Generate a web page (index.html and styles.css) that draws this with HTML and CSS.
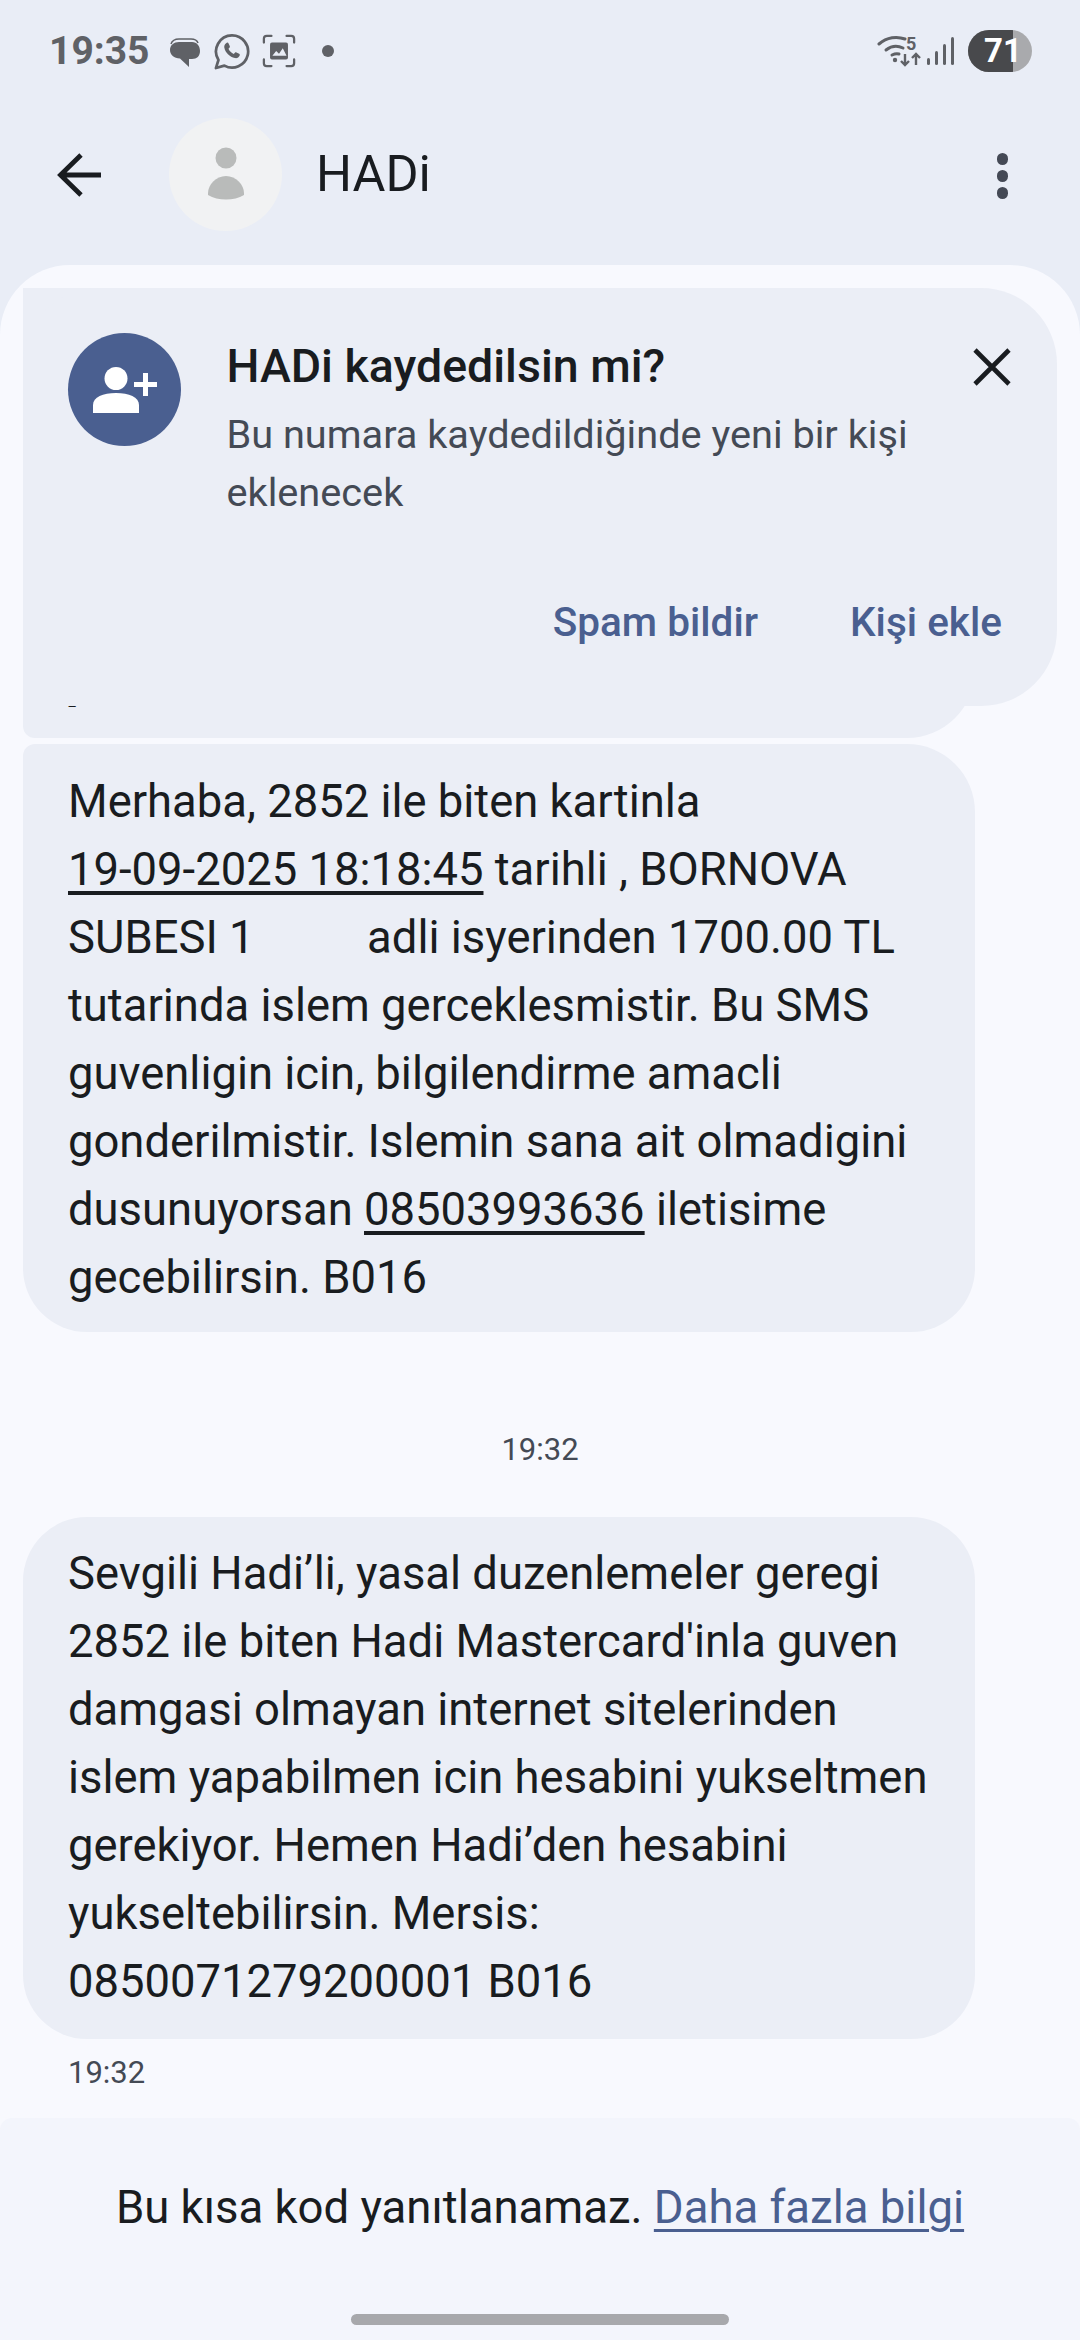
FILE: index.html
```html
<!DOCTYPE html>
<html lang="tr">
<head>
<meta charset="utf-8">
<title>HADi</title>
<link rel="stylesheet" href="styles.css">
</head>
<body>
<div class="screen">
  <div class="status">
    <div class="status-left">
      <span class="clock">19:35</span>
      <svg class="si msg" width="32" height="32" viewBox="0 0 32 32"><path d="M2 7c1-3 4-5 8-5h12c3 0 6 1 7 4" fill="none" stroke="#5f6166" stroke-width="1.500"/><path d="M10 5h13c5 0 8 4 8 9s-3 8-8 8h-3v8l-9-8.500C5 21 1 18 1 13c0-5 4-8 9-8z" fill="#5f6166"/></svg>
      <svg class="si wa" width="37" height="37" viewBox="0 0 38 38"><path d="M19.500 2.500a16.500 16.500 0 1 1-7.800 31l-8.700 2.500 2.600-8.300a16.500 16.500 0 0 1 13.900-25.200z" fill="none" stroke="#5f6166" stroke-width="2.800" stroke-linejoin="round"/><path d="M13.500 10.500c1-1 2-.8 2.500.2l1.300 2.800c.2.600 0 1.200-.4 1.600l-1 1.100c1 2.400 3 4.300 5.400 5.400l1.200-1.300c.5-.5 1-.6 1.600-.3l2.700 1.400c.7.300.9 1 .6 1.800-.8 2-2.700 3-4.800 2.600-5.500-1.100-10-5.500-11-10.800-.3-2 .6-3.500 1.900-4.500z" fill="#5f6166"/></svg>
      <svg class="si" width="34" height="34" viewBox="0 0 36 36"><path d="M2 9V5q0-3 3-3h5M26 2h5q3 0 3 3v4M34 27v4q0 3-3 3h-5M10 34H5q-3 0-3-3v-4" fill="none" stroke="#5f6166" stroke-width="2.400" stroke-linecap="round"/><rect x="8.500" y="9" width="19" height="18" rx="2" fill="#5f6166"/><path d="M11 23l4-5 3 3 4-6 4 8z" fill="#e9edf6"/></svg>
      <span class="dot"></span>
    </div>
    <div class="status-right">
      <svg class="sr" width="44" height="40" viewBox="0 -8 44 40"><g fill="none" stroke="#5f6166" stroke-width="3" stroke-linecap="round"><path d="M2 9C10 2 20 1 28 4"/><path d="M9 15c5-4 11-5 17-2"/><path d="M15 20c2-1 4-2 7-1"/></g><circle cx="18" cy="25" r="2.200" fill="#5f6166"/><path d="M28 19v11m-4-4 4 4 4-4M39 30V19m-4 4 4-4 4 4" fill="none" stroke="#5f6166" stroke-width="2.400"/><text x="29" y="15" class="five">5</text></svg>
      <div class="signal"><i class="b1"></i><i class="b2"></i><i class="b3"></i><i class="b4"></i></div>
      <div class="battery"><span class="bat-fill">71</span></div>
    </div>
  </div>

  <header class="topbar">
    <svg class="back" width="46" height="46" viewBox="0 0 46 46"><path d="M45 23H6M25 3 4.500 23 25 43" fill="none" stroke="#191c20" stroke-width="4.800"/></svg>
    <div class="avatar">
      <svg width="40" height="56" viewBox="0 0 40 56"><circle cx="20" cy="11" r="10.500" fill="#b9bbba"/><path d="M2 46c0-8 8-17 18-17s18 9 18 17v2c-10 6-26 6-36 0z" fill="#b9bbba"/></svg>
    </div>
    <h1 class="name">HADi</h1>
    <div class="menu"><i></i><i></i><i></i></div>
  </header>

  <main class="surface">
    <div class="card">
      <div class="card-top">
        <div class="card-avatar">
          <svg width="64" height="46" viewBox="0 0 64 46"><circle cx="23" cy="11.500" r="11.500" fill="#fff"/><path d="M0 46V38c0-8 10-12 23-12s23 4 23 12v8z" fill="#fff"/><path d="M41 17.500h23M52.500 6v23" stroke="#fff" stroke-width="5"/></svg>
        </div>
        <div class="card-text">
          <div class="card-title">HADi kaydedilsin mi?</div>
          <div class="card-sub">Bu numara kaydedildiğinde yeni bir kişi<br>eklenecek</div>
        </div>
        <svg class="close" width="40" height="40" viewBox="0 0 40 40"><path d="M3 3l34 34M37 3 3 37" fill="none" stroke="#191c20" stroke-width="4.600"/></svg>
      </div>
      <div class="card-actions">
        <span class="action">Spam bildir</span>
        <span class="action">Kişi ekle</span>
      </div>
    </div>

    <div class="messages">
      <div class="bubble first"><span class="dash">-</span></div>
      <div class="bubble second">Merhaba, 2852 ile biten kartinla<br><u>19-09-2025 18:18:45</u> tarihli , BORNOVA<br>SUBESI 1          adli isyerinden 1700.00 TL<br>tutarinda islem gerceklesmistir. Bu SMS<br>guvenligin icin, bilgilendirme amacli<br>gonderilmistir. Islemin sana ait olmadigini<br>dusunuyorsan <u>08503993636</u> iletisime<br>gecebilirsin. B016</div>
      <div class="stamp-center">19:32</div>
      <div class="bubble third">Sevgili Hadi’li, yasal duzenlemeler geregi<br>2852 ile biten Hadi Mastercard'inla guven<br>damgasi olmayan internet sitelerinden<br>islem yapabilmen icin hesabini yukseltmen<br>gerekiyor. Hemen Hadi’den hesabini<br>yukseltebilirsin. Mersis:<br>0850071279200001 B016</div>
      <div class="stamp-left">19:32</div>
    </div>

    <footer class="footer">
      <p class="notice">Bu kısa kod yanıtlanamaz. <a class="more">Daha fazla bilgi</a></p>
      <div class="home"></div>
    </footer>
  </main>
</div>
</body>
</html>
```
FILE: styles.css
```css
* { box-sizing: border-box; }
html, body { margin: 0; padding: 0; }
body { width: 1080px; height: 2340px; overflow: hidden; background: #e9edf6; font-family: Roboto, "Noto Sans", sans-serif; }
.screen { width: 1080px; height: 2340px; display: flex; flex-direction: column; }

.status { height: 102px; padding: 30px 48px 0 49px; display: flex; justify-content: space-between; align-items: flex-start; flex: none; }
.status-left { display: flex; align-items: center; height: 42px; }
.clock { font-size: 39px; font-weight: 700; color: #5f6166; line-height: 42px; width: 120px; }
.si { display: block; margin-right: 12px; }
.msg { margin-top: 4px; }
.dot { width: 12px; height: 12px; border-radius: 50%; background: #5f6166; margin-left: 14px; }
.status-right { display: flex; align-items: center; height: 42px; }
.sr { display: block; margin: -8px 6px 0 0; }
.five { font: 700 18px Roboto, sans-serif; fill: #5f6166; }
.signal { display: flex; align-items: flex-end; gap: 4.500px; height: 28px; margin-right: 14px; }
.signal i { display: block; width: 3.500px; background: #5f6166; border-radius: 2px; }
.b1 { height: 7px; } .b2 { height: 14px; } .b3 { height: 21px; } .b4 { height: 28px; }
.battery { width: 64px; height: 42px; border-radius: 21px; background: #a9aaad; overflow: hidden; }
.bat-fill { display: block; width: 45px; height: 42px; background: #48494c; color: #fff; font-size: 33px; font-weight: 700; line-height: 42px; padding-left: 16px; white-space: nowrap; }

.topbar { height: 163px; display: flex; align-items: flex-start; flex: none; padding-left: 56px; position: relative; }
.back { display: block; margin-top: 50px; flex: none; }
.avatar { width: 113px; height: 113px; border-radius: 50%; background: #f1f2f3; margin: 16px 0 0 67px; display: flex; align-items: center; justify-content: center; flex: none; }
.name { margin: 0 0 0 34px; font-size: 50.500px; font-weight: 400; color: #191c20; line-height: 56px; padding-top: 44px; height: 100px; }
.menu { margin-left: auto; margin-right: 72px; margin-top: 51px; display: flex; flex-direction: column; gap: 5.500px; }
.menu i { display: block; width: 11.500px; height: 11.500px; border-radius: 50%; background: #444955; }

.surface { position: relative; flex: 1; background: #f8f9fe; border-radius: 70px 70px 0 0; padding-top: 23px; display: flex; flex-direction: column; overflow: hidden; }
.card { position: absolute; left: 23px; top: 23px; width: 1034px; height: 418px; background: #ebeef6; border-radius: 76px 76px 76px 0; padding: 45px 45px 0 45px; }
.card-top { display: flex; align-items: flex-start; }
.card-avatar { width: 113px; height: 113px; border-radius: 50%; background: #4a5f90; display: flex; align-items: center; justify-content: center; flex: none; }
.card-avatar svg { display: block; }
.card-text { margin-left: 45.500px; flex: 1; }
.card-title { font-size: 46.500px; font-weight: 500; color: #191c20; line-height: 52px; margin-top: 7px; }
.card-sub { font-size: 39.700px; font-weight: 400; color: #444a55; line-height: 58px; margin-top: 14px; }
.close { display: block; flex: none; margin-top: 14px; }
.card-actions { display: flex; justify-content: flex-end; gap: 92px; margin-top: 76px; padding-right: 10px; }
.action { font-size: 40.500px; font-weight: 500; color: #4a5f90; line-height: 48px; }

.messages { flex: 1; padding: 0 23px; display: flex; flex-direction: column; align-items: flex-start; }
.bubble { width: 952px; background: #ebeef6; color: #191c20; font-size: 45.400px; line-height: 68px; padding: 23.500px 0 0 45px; white-space: pre-wrap; }
.bubble u { text-decoration-thickness: 3.500px; text-underline-offset: 6px; }
.first { height: 450px; border-radius: 0 0 68px 12px; padding: 0 0 0 45px; display: flex; align-items: flex-end; }
.dash { font-size: 30px; line-height: 60px; margin-bottom: 3px; }
.second { margin-top: 6px; height: 588px; border-radius: 12px 68px 64px 64px; }
.third { height: 522px; border-radius: 64px; padding-top: 23px; }
.stamp-center { align-self: center; margin: 98px 0 47px; font-size: 31px; line-height: 40px; color: #444a55; }
.stamp-left { font-size: 31px; line-height: 40px; color: #444a55; margin: 14px 0 0 45px; }

.footer { position: relative; height: 222px; flex: none; background: #f3f5fc; border-radius: 12px 12px 0 0; padding-top: 62px; display: flex; flex-direction: column; align-items: center; }
.notice { margin: 0; font-size: 45.500px; line-height: 56px; color: #191c20; }
.more { color: #4a5f90; text-decoration: underline; text-decoration-thickness: 3px; text-underline-offset: 6px; }
.home { position: absolute; left: 351px; top: 196px; width: 378px; height: 11px; border-radius: 6px; background: #a7a8ac; }
```
